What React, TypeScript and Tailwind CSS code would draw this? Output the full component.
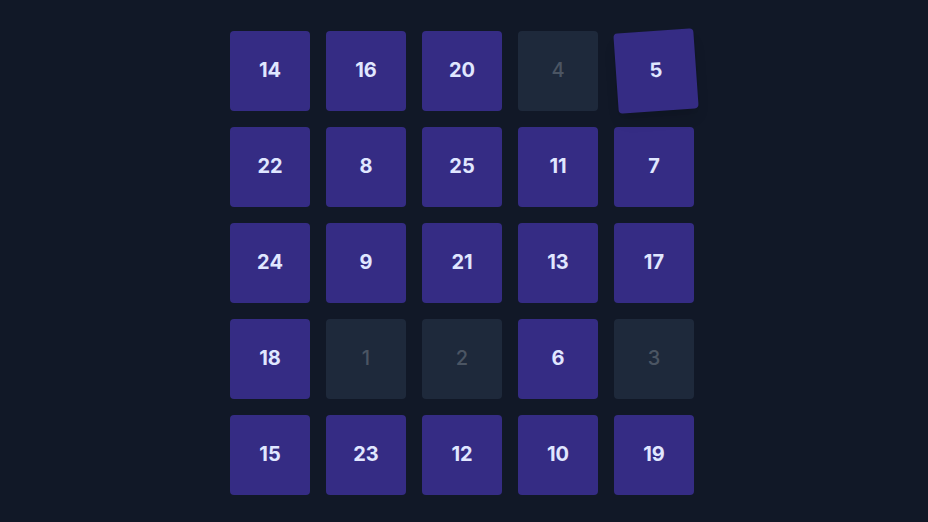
const tiles: number[] = [
  14, 16, 20, 4, 5,
  22, 8, 25, 11, 7,
  24, 9, 21, 13, 17,
  18, 1, 2, 6, 3,
  15, 23, 12, 10, 19,
];

// tiles that are already placed are dimmed
const placed = new Set([1, 2, 3, 4]);
const dragging = 5;

export default function App() {
  return (
    <div
      className="min-h-screen w-full bg-[#111827] flex justify-center pt-[31px] pr-1"
      style={{ fontFamily: 'Inter, "Noto Sans", sans-serif' }}
    >
      <div className="grid grid-cols-5 gap-4 h-fit">
        {tiles.map((n) => {
          const isPlaced = placed.has(n);
          return (
            <div
              key={n}
              className={
                isPlaced
                  ? 'w-20 h-20 pb-0.5 rounded flex items-center justify-center bg-[#1e293b] text-[#4b5563] text-xl font-medium'
                  : n === dragging
                    ? 'w-20 h-20 pb-0.5 rounded flex items-center justify-center bg-[#352c84] text-[#e0e7ff] text-xl font-bold -rotate-[4deg] translate-x-0.5 shadow-lg'
                    : 'w-20 h-20 pb-0.5 rounded flex items-center justify-center bg-[#352c84] text-[#e0e7ff] text-xl font-bold'
              }
            >
              {n}
            </div>
          );
        })}
      </div>
    </div>
  );
}
